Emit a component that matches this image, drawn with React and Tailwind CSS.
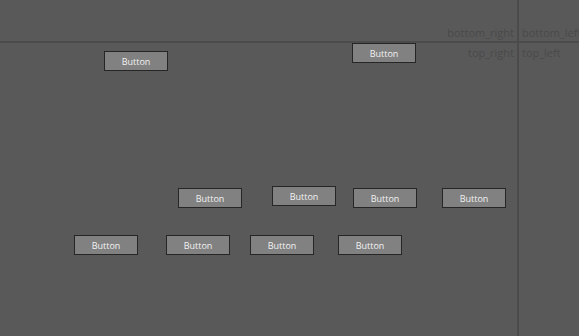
import React from 'react';

const buttons = [
  { x: 104, y: 51 },
  { x: 352, y: 43 },
  { x: 178, y: 188 },
  { x: 272, y: 186 },
  { x: 353, y: 188 },
  { x: 442, y: 188 },
  { x: 74, y: 235 },
  { x: 166, y: 235 },
  { x: 250, y: 235 },
  { x: 338, y: 235 },
];

const CanvasButton = ({ x, y }) => (
  <button
    className="absolute flex h-[20px] w-[64px] items-center justify-center border border-[#262626] bg-[#818181] text-[9px] leading-none text-[#f2f2f2]"
    style={{ left: x, top: y }}
  >
    Button
  </button>
);

export default function App() {
  return (
    <div className="relative h-[336px] w-[579px] overflow-hidden bg-[#595959] font-['Open_Sans',sans-serif]">
      {/* guide lines */}
      <div className="absolute left-0 top-[41px] h-[2px] w-full bg-[#4b4b4b]" />
      <div className="absolute left-[517px] top-0 h-full w-[2px] bg-[#4b4b4b]" />

      {/* anchor labels */}
      <div className="absolute right-[65px] top-[25px] text-[11px] text-[#4a4a4a]">bottom_right</div>
      <div className="absolute left-[522px] top-[25px] whitespace-nowrap text-[11px] text-[#4a4a4a]">bottom_left</div>
      <div className="absolute right-[65px] top-[45px] text-[11px] text-[#4a4a4a]">top_right</div>
      <div className="absolute left-[522px] top-[45px] whitespace-nowrap text-[11px] text-[#4a4a4a]">top_left</div>

      {buttons.map((b, i) => (
        <CanvasButton key={i} x={b.x} y={b.y} />
      ))}
    </div>
  );
}
